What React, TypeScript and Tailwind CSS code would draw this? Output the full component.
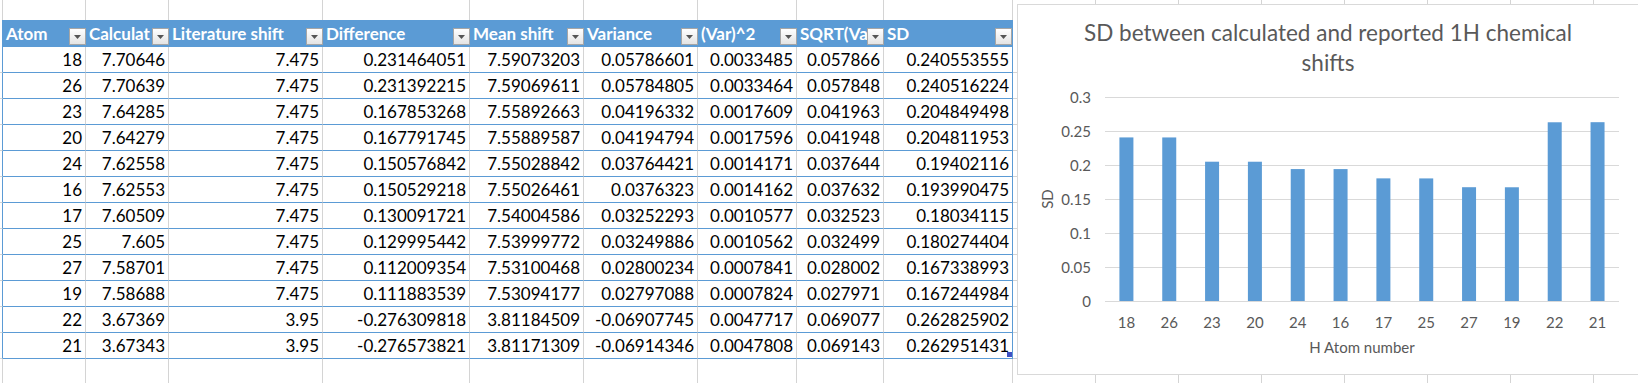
import React from "react";

const colW = [
  "w-[83px]",
  "w-[83px]",
  "w-[154px]",
  "w-[147px]",
  "w-[114px]",
  "w-[114px]",
  "w-[99px]",
  "w-[87px]",
  "w-[129px]",
];

// header labels as they show in the narrow cells
const headers = [
  "Atom",
  "Calculat",
  "Literature shift",
  "Difference",
  "Mean shift",
  "Variance",
  "(Var)^2",
  "SQRT(Va",
  "SD",
];

const rows = [
  ["18", "7.70646", "7.475", "0.231464051", "7.59073203", "0.05786601", "0.0033485", "0.057866", "0.240553555"],
  ["26", "7.70639", "7.475", "0.231392215", "7.59069611", "0.05784805", "0.0033464", "0.057848", "0.240516224"],
  ["23", "7.64285", "7.475", "0.167853268", "7.55892663", "0.04196332", "0.0017609", "0.041963", "0.204849498"],
  ["20", "7.64279", "7.475", "0.167791745", "7.55889587", "0.04194794", "0.0017596", "0.041948", "0.204811953"],
  ["24", "7.62558", "7.475", "0.150576842", "7.55028842", "0.03764421", "0.0014171", "0.037644", "0.19402116"],
  ["16", "7.62553", "7.475", "0.150529218", "7.55026461", "0.0376323", "0.0014162", "0.037632", "0.193990475"],
  ["17", "7.60509", "7.475", "0.130091721", "7.54004586", "0.03252293", "0.0010577", "0.032523", "0.18034115"],
  ["25", "7.605", "7.475", "0.129995442", "7.53999772", "0.03249886", "0.0010562", "0.032499", "0.180274404"],
  ["27", "7.58701", "7.475", "0.112009354", "7.53100468", "0.02800234", "0.0007841", "0.028002", "0.167338993"],
  ["19", "7.58688", "7.475", "0.111883539", "7.53094177", "0.02797088", "0.0007824", "0.027971", "0.167244984"],
  ["22", "3.67369", "3.95", "-0.276309818", "3.81184509", "-0.06907745", "0.0047717", "0.069077", "0.262825902"],
  ["21", "3.67343", "3.95", "-0.276573821", "3.81171309", "-0.06914346", "0.0047808", "0.069143", "0.262951431"],
];

// empty sheet columns to the right of the table
const extra = [0, 1, 2, 3, 4, 5, 6, 7];

function FilterButton() {
  return (
    <div className="w-[17px] h-[17px] shrink-0 self-end mb-[2px] border border-[#A6A6A6] bg-linear-to-b from-white to-[#E4E4E4] flex items-center justify-center">
      <svg width="7" height="4" viewBox="0 0 7 4">
        <path d="M0 0h7L3.5 4z" fill="#555555" />
      </svg>
    </div>
  );
}

function EmptyRow({ h }: { h: string }) {
  return (
    <div className={`flex ${h}`}>
      <div className="w-[3px] shrink-0 border-r border-[#D4D4D4]" />
      {colW.map((w, i) => (
        <div key={i} className={`${w} shrink-0 border-r border-[#D4D4D4]`} />
      ))}
      {extra.map((i) => (
        <div key={i} className="w-[83px] shrink-0 border-r border-[#D4D4D4]" />
      ))}
    </div>
  );
}

function Chart() {
  const data = [
    ["18", 0.240553555],
    ["26", 0.240516224],
    ["23", 0.204849498],
    ["20", 0.204811953],
    ["24", 0.19402116],
    ["16", 0.193990475],
    ["17", 0.18034115],
    ["25", 0.180274404],
    ["27", 0.167338993],
    ["19", 0.167244984],
    ["22", 0.262825902],
    ["21", 0.262951431],
  ] as const;
  const ticks = ["0", "0.05", "0.1", "0.15", "0.2", "0.25", "0.3"];
  const base = 223;
  const step = 42.83;

  return (
    <div className="absolute left-[1017px] top-[4px] w-[622px] h-[371px] bg-white border border-[#D9D9D9] flex flex-col">
      <div className="pt-[13px] text-center text-[22.5px] leading-[30px] text-[#595959]">
        SD between calculated and reported 1H chemical
        <br />
        shifts
      </div>
      <svg width="620" height="296" className="text-[15px]">
        {ticks.map((t, k) => (
          <g key={t}>
            <line x1="87" x2="601" y1={base - k * 34 + 0.5} y2={base - k * 34 + 0.5} stroke="#D9D9D9" strokeWidth="1" />
            <text x="73" y={base - k * 34} textAnchor="end" dominantBaseline="central" fill="#595959">
              {t}
            </text>
          </g>
        ))}
        {data.map(([label, v], i) => {
          const h = (v / 0.3) * 204;
          const cx = 87 + step * (i + 0.5);
          return (
            <g key={label}>
              <rect x={cx - 7} y={base - h} width="14" height={h} fill="#5B9BD5" />
              <text x={cx} y="244" textAnchor="middle" dominantBaseline="central" fill="#595959">
                {label}
              </text>
            </g>
          );
        })}
        <text x="344" y="269" textAnchor="middle" dominantBaseline="central" fill="#595959">
          H Atom number
        </text>
        <text
          x="29"
          y="121"
          textAnchor="middle"
          dominantBaseline="central"
          fill="#595959"
          transform="rotate(-90 29 121)"
        >
          SD
        </text>
      </svg>
    </div>
  );
}

export default function App() {
  return (
    <div className="relative w-[1638px] h-[383px] overflow-hidden bg-white font-[Lato,sans-serif]">
      <EmptyRow h="h-[20px]" />

      {/* Header row */}
      <div className="flex h-[27px]">
        <div className="w-[3px] shrink-0 border-r border-[#5B9BD5]" />
        {colW.map((w, i) => (
          <div
            key={i}
            className={`${w} shrink-0 flex bg-[#5B9BD5] text-white font-bold text-[17px] ${
              i === colW.length - 1 ? "border-r border-[#5B9BD5]" : ""
            }`}
          >
            <span className="flex-1 min-w-0 whitespace-nowrap pl-[3px] self-center leading-[27px]">
              {headers[i]}
            </span>
            <FilterButton />
          </div>
        ))}
        {extra.map((i) => (
          <div key={i} className="w-[83px] shrink-0 border-r border-[#D4D4D4]" />
        ))}
      </div>

      {/* Data rows */}
      {rows.map((r, ri) => (
        <div key={ri} className="flex h-[26px]">
          <div className="w-[3px] shrink-0 border-r border-b border-r-[#5B9BD5] border-b-[#D4D4D4]" />
          {r.map((cell, ci) => (
            <div
              key={ci}
              className={`${colW[ci]} shrink-0 relative border-b border-[#5B9BD5] border-r ${
                ci === r.length - 1 ? "border-r-[#5B9BD5]" : "border-r-[#D4D4D4]"
              } flex items-center justify-end pr-[3px] text-[17px] text-black whitespace-nowrap`}
            >
              {cell}
              {ri === rows.length - 1 && ci === r.length - 1 && (
                <div className="absolute right-0 bottom-[1px] w-[5px] h-[5px] bg-[#3F51C4]" />
              )}
            </div>
          ))}
          {extra.map((i) => (
            <div key={i} className="w-[83px] shrink-0 border-r border-b border-[#D4D4D4]" />
          ))}
        </div>
      ))}

      <EmptyRow h="h-[26px]" />

      <Chart />
    </div>
  );
}
